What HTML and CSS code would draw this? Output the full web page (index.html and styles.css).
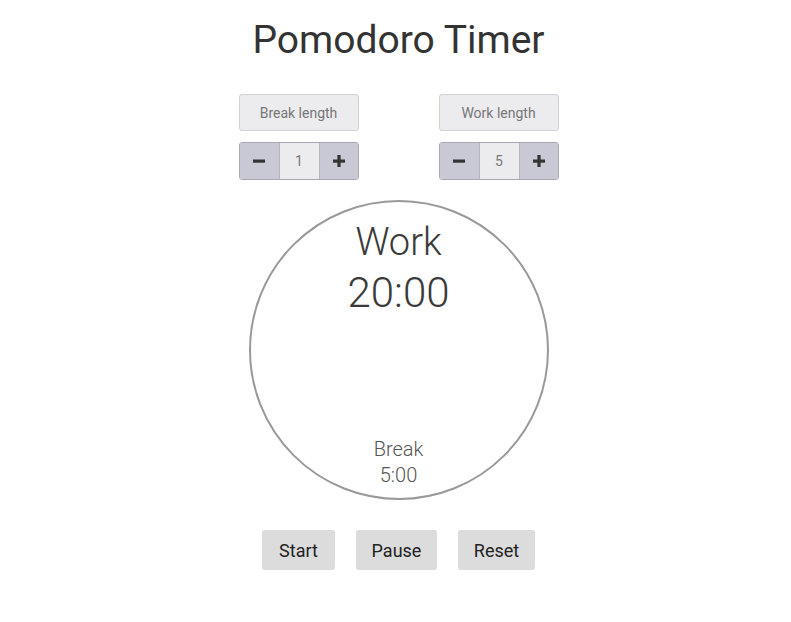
FILE: index.html
```html
<!DOCTYPE html>
<html lang="en">
<head>
<meta charset="utf-8">
<title>Pomodoro Timer</title>
<link rel="stylesheet" href="styles.css">
</head>
<body>
<main class="app">
  <h1 class="title">Pomodoro Timer</h1>
  <section class="settings">
    <div class="setting">
      <div class="setting-label">Break length</div>
      <div class="stepper">
        <button class="step-btn" aria-label="decrease"><svg viewBox="0 0 14 14" width="14" height="14"><rect x="1" y="5.5" width="12" height="3.2" fill="#333"/></svg></button>
        <span class="step-value">1</span>
        <button class="step-btn" aria-label="increase"><svg viewBox="0 0 14 14" width="14" height="14"><rect x="1" y="5.5" width="12" height="3.2" fill="#333"/><rect x="5.4" y="1" width="3.2" height="12" fill="#333"/></svg></button>
      </div>
    </div>
    <div class="setting">
      <div class="setting-label">Work length</div>
      <div class="stepper">
        <button class="step-btn" aria-label="decrease"><svg viewBox="0 0 14 14" width="14" height="14"><rect x="1" y="5.5" width="12" height="3.2" fill="#333"/></svg></button>
        <span class="step-value">5</span>
        <button class="step-btn" aria-label="increase"><svg viewBox="0 0 14 14" width="14" height="14"><rect x="1" y="5.5" width="12" height="3.2" fill="#333"/><rect x="5.4" y="1" width="3.2" height="12" fill="#333"/></svg></button>
      </div>
    </div>
  </section>
  <section class="clock">
    <div class="clock-main">
      <div class="clock-mode">Work</div>
      <div class="clock-time">20:00</div>
    </div>
    <div class="clock-next">
      <div>Break</div>
      <div>5:00</div>
    </div>
  </section>
  <section class="controls">
    <button class="ctrl ctrl-start">Start</button>
    <button class="ctrl ctrl-pause">Pause</button>
    <button class="ctrl ctrl-reset">Reset</button>
  </section>
</main>
</body>
</html>
```
FILE: styles.css
```css
* { box-sizing: border-box; }
body {
  margin: 0;
  background: #fff;
  font-family: Roboto, "Noto Sans", sans-serif;
  color: #333;
}
.app {
  display: flex;
  flex-direction: column;
  align-items: center;
  padding-left: 6px;
}
.title {
  margin: 14px 0 0;
  font-size: 39px;
  font-weight: 400;
  line-height: 52px;
  color: #333;
}
.settings {
  display: flex;
  gap: 80px;
  margin-top: 28px;
}
.setting {
  width: 120px;
  display: flex;
  flex-direction: column;
  gap: 11px;
}
.setting-label {
  height: 37px;
  display: flex;
  align-items: center;
  justify-content: center;
  background: #ececee;
  border: 1px solid #d2d2d6;
  border-radius: 3px;
  font-size: 14px;
  color: #777;
}
.stepper {
  height: 38px;
  display: flex;
  border: 1px solid #a9a9b4;
  border-radius: 3px;
  overflow: hidden;
  background: #ececee;
}
.step-btn {
  width: 39px;
  border: 0;
  padding: 0;
  background: #c9c9d6;
  display: flex;
  align-items: center;
  justify-content: center;
}
.step-btn + .step-value { border-left: 1px solid #b5b5c0; }
.step-value + .step-btn { border-left: 1px solid #b5b5c0; }
.step-value {
  flex: 1;
  display: flex;
  align-items: center;
  justify-content: center;
  font-size: 14px;
  color: #777;
}
.clock {
  width: 300px;
  height: 300px;
  margin-top: 20px;
  border: 2px solid #999;
  border-radius: 50%;
  display: flex;
  flex-direction: column;
  align-items: center;
  justify-content: space-between;
  padding: 17px 0 10px;
}
.clock-main { text-align: center; }
.clock-mode {
  font-size: 38px;
  font-weight: 300;
  line-height: 46px;
  color: #3a3a3a;
}
.clock-time {
  font-size: 42px;
  font-weight: 300;
  line-height: 56px;
  color: #3a3a3a;
}
.clock-next {
  text-align: center;
  font-size: 20px;
  font-weight: 300;
  line-height: 26px;
  color: #555;
}
.controls {
  display: flex;
  gap: 21px;
  margin-top: 30px;
}
.ctrl {
  height: 40px;
  padding: 0 12px;
  border: 0;
  border-radius: 3px;
  background: #dcdcdc;
  font-family: Roboto, "Noto Sans", sans-serif;
  font-size: 18px;
  color: #222;
}
.ctrl-start { width: 73px; }
.ctrl-pause { width: 81px; }
.ctrl-reset { width: 77px; }
```
